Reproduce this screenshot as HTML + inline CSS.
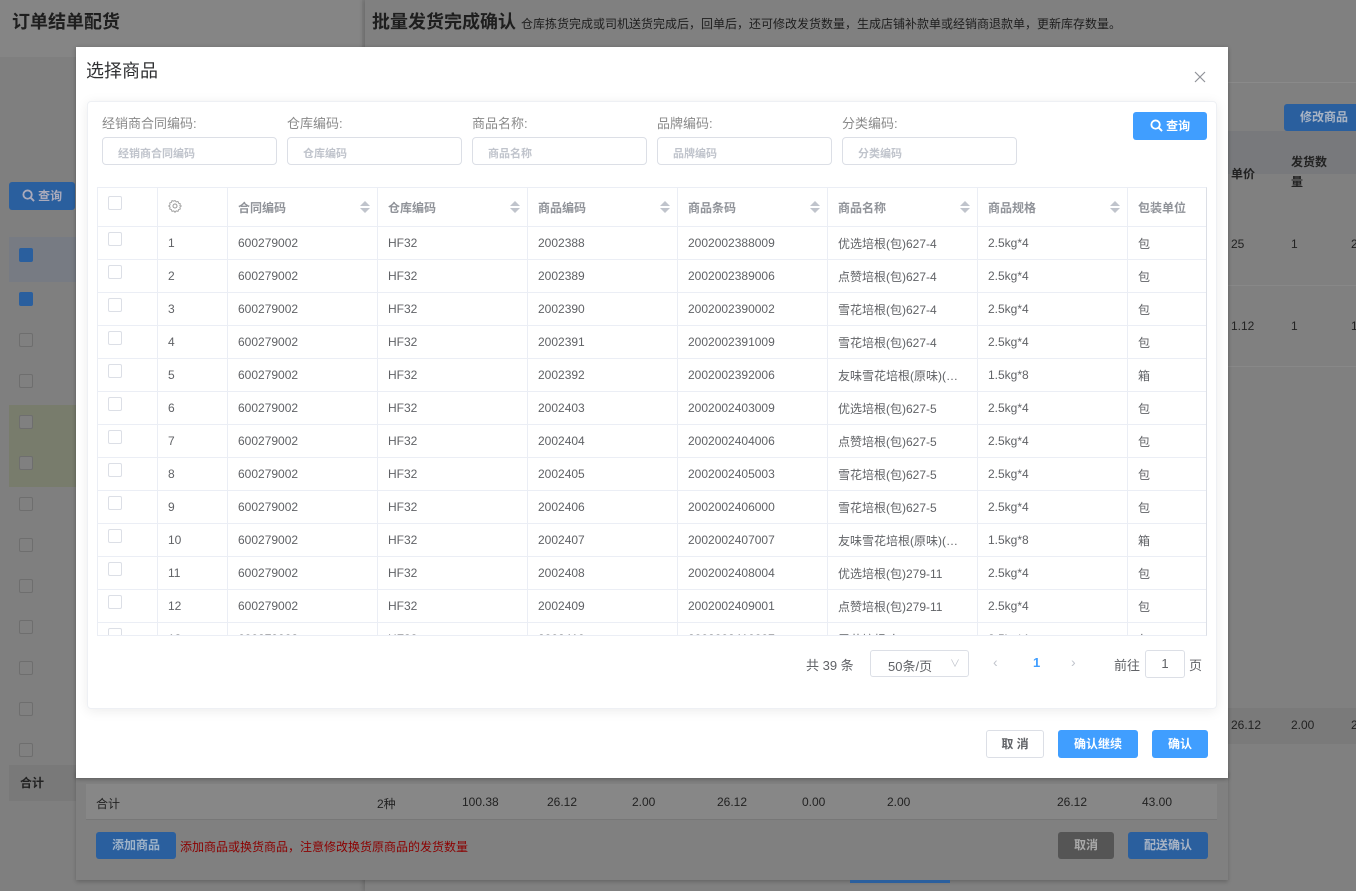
<!DOCTYPE html>
<html><head><meta charset="utf-8"><style>
*{margin:0;padding:0;box-sizing:border-box}
body{width:1356px;height:891px;overflow:hidden;background:#7f7f7f;font-family:"Liberation Sans","Noto Sans CJK SC",sans-serif;position:relative;color:#606266}
.a{position:absolute}
.cb{position:absolute;width:14px;height:14px;border:1px solid #6e6e6e;border-radius:2px;background:#808080}
.cbw{position:absolute;width:14px;height:14px;border:1px solid #dcdfe6;border-radius:2px;background:#fff}
table{border-collapse:collapse;table-layout:fixed}
td,th{border:1px solid #ebeef5;font-size:12px;padding-left:10px;text-align:left;white-space:nowrap;overflow:hidden;color:#606266;position:relative}
th{height:39px;font-weight:bold;font-size:12px;color:#909399}
td{height:33px}
.sort{position:absolute;right:12px;top:13px;width:0;height:0}
.sort:before{content:"";position:absolute;left:-5px;top:0;border:5px solid transparent;border-bottom:5px solid #c0c4cc;border-top:0}
.sort:after{content:"";position:absolute;left:-5px;top:7px;border:5px solid transparent;border-top:5px solid #c0c4cc;border-bottom:0}
.lbl{position:absolute;top:113px;font-size:13px;color:#8a8a8a}
.inp{position:absolute;top:137px;width:175px;height:28px;border:1px solid #dcdfe6;border-radius:4px;font-size:11px;color:#c0c4cc;padding:7px 15px;font-weight:bold}
.btn{position:absolute;border-radius:3px;font-size:12px;font-weight:bold;text-align:center;color:#fff}
.bt span{position:absolute}
</style></head><body>
<div class="a" style="left:0;top:0;width:362px;height:57px;background:#858585"></div>
<div class="a" style="left:12px;top:8px;font-size:18px;font-weight:bold;color:#1e1e1e">订单结单配货</div>
<div class="btn" style="left:9px;top:182px;width:66px;height:28px;background:#2a5f9e;line-height:28px;color:#aab"><svg width="13" height="13" viewBox="0 0 14 14" style="vertical-align:-2px"><circle cx="6" cy="6" r="4.5" fill="none" stroke="#aab" stroke-width="2"/><path d="M9.5 9.5L13 13" stroke="#aab" stroke-width="2"/></svg> 查询</div>
<div class="a" style="left:9px;top:237px;width:70px;height:45px;background:#777b83"></div>
<div class="a" style="left:9px;top:405px;width:70px;height:82px;background:#787c6c"></div>
<div class="a" style="left:9px;top:765px;width:70px;height:36px;background:#797979"></div>
<div class="a" style="left:20px;top:774px;font-size:12px;color:#222;font-weight:bold">合计</div>
<div class="a" style="left:19px;top:248px;width:14px;height:14px;background:#2a5f9e;border-radius:2px"></div>
<div class="a" style="left:19px;top:292px;width:14px;height:14px;background:#2a5f9e;border-radius:2px"></div>
<div class="cb" style="left:19px;top:333px"></div><div class="cb" style="left:19px;top:374px"></div>
<div class="cb" style="left:19px;top:415px"></div><div class="cb" style="left:19px;top:456px"></div>
<div class="cb" style="left:19px;top:497px"></div><div class="cb" style="left:19px;top:538px"></div>
<div class="cb" style="left:19px;top:579px"></div><div class="cb" style="left:19px;top:620px"></div>
<div class="cb" style="left:19px;top:661px"></div><div class="cb" style="left:19px;top:702px"></div>
<div class="cb" style="left:19px;top:743px"></div>
<div class="a" style="left:365px;top:0;width:991px;height:891px;background:#808080;box-shadow:-2px 0 4px rgba(0,0,0,.15)"></div>
<div class="a" style="left:372px;top:8px;font-size:18px;font-weight:bold;color:#1e1e1e">批量发货完成确认 <span style="font-size:12px;font-weight:normal">仓库拣货完成或司机送货完成后，回单后，还可修改发货数量，生成店铺补款单或经销商退款单，更新库存数量。</span></div>
<div class="a" style="left:1228px;top:82px;width:128px;height:1px;background:#8a8a8a"></div>
<div class="btn" style="left:1284px;top:104px;width:80px;height:27px;background:#2a5f9e;line-height:27px;color:#a9b4c4">修改商品</div>
<div class="a" style="left:1228px;top:131px;width:128px;height:43px;background:#78797c"></div>
<div class="a" style="left:1231px;top:165px;font-size:12px;font-weight:bold;color:#222">单价</div>
<div class="a" style="left:1291px;top:152px;font-size:12px;font-weight:bold;color:#222;line-height:20px">发货数<br>量</div>
<div class="a" style="left:1231px;top:237px;font-size:12px;color:#222">25</div><div class="a" style="left:1291px;top:237px;font-size:12px;color:#222">1</div><div class="a" style="left:1351px;top:237px;font-size:12px;color:#222">2</div>
<div class="a" style="left:1228px;top:285px;width:128px;height:1px;background:#888"></div>
<div class="a" style="left:1231px;top:319px;font-size:12px;color:#222">1.12</div><div class="a" style="left:1291px;top:319px;font-size:12px;color:#222">1</div><div class="a" style="left:1351px;top:319px;font-size:12px;color:#222">1</div>
<div class="a" style="left:1228px;top:366px;width:128px;height:1px;background:#888"></div>
<div class="a" style="left:1228px;top:708px;width:128px;height:36px;background:#7a7a7a"></div>
<div class="a" style="left:1231px;top:718px;font-size:12px;color:#222">26.12</div><div class="a" style="left:1291px;top:718px;font-size:12px;color:#222">2.00</div><div class="a" style="left:1351px;top:718px;font-size:12px;color:#222">2</div>
<div class="a" style="left:76px;top:770px;width:1152px;height:110px;background:#808080;box-shadow:0 2px 4px rgba(0,0,0,.2)"></div>
<div class="a" style="left:86px;top:784px;width:1131px;height:36px;background:#878787;border-bottom:1px solid #777"></div>
<div class="a bt" style="left:96px;top:795px;font-size:12px;color:#222;width:1120px">合计
<span style="left:281px">2种</span><span style="left:366px">100.38</span><span style="left:451px">26.12</span><span style="left:536px">2.00</span><span style="left:621px">26.12</span><span style="left:706px">0.00</span><span style="left:791px">2.00</span><span style="left:961px">26.12</span><span style="left:1046px">43.00</span></div>
<div class="btn" style="left:96px;top:832px;width:80px;height:27px;background:#2a5f9e;line-height:27px;color:#9fb3c8">添加商品</div>
<div class="a" style="left:180px;top:838px;font-size:12px;color:#8b0000">添加商品或换货商品，注意修改换货原商品的发货数量</div>
<div class="btn" style="left:1058px;top:832px;width:56px;height:27px;background:#555;line-height:27px;color:#aaa">取消</div>
<div class="btn" style="left:1128px;top:832px;width:80px;height:27px;background:#2a5f9e;line-height:27px;color:#a9b4c4">配送确认</div>
<div class="a" style="left:850px;top:880px;width:100px;height:3px;background:#2a5f9e"></div>
<div class="a" style="left:76px;top:47px;width:1152px;height:731px;background:#fff;box-shadow:0 1px 4px rgba(0,0,0,.3)"></div>
<div class="a" style="left:86px;top:57px;font-size:18px;color:#303133">选择商品</div>
<svg class="a" style="left:1194px;top:71px" width="12" height="12" viewBox="0 0 12 12"><path d="M1 1L11 11M11 1L1 11" stroke="#909399" stroke-width="1.2"/></svg>
<div class="a" style="left:87px;top:101px;width:1130px;height:608px;background:#fff;border:1px solid #eef0f4;border-radius:4px;box-shadow:0 2px 12px rgba(0,0,0,.08)"></div>
<div class="lbl" style="left:102px">经销商合同编码:</div>
<div class="lbl" style="left:287px">仓库编码:</div>
<div class="lbl" style="left:472px">商品名称:</div>
<div class="lbl" style="left:657px">品牌编码:</div>
<div class="lbl" style="left:842px">分类编码:</div>
<div class="inp" style="left:102px">经销商合同编码</div>
<div class="inp" style="left:287px">仓库编码</div>
<div class="inp" style="left:472px">商品名称</div>
<div class="inp" style="left:657px">品牌编码</div>
<div class="inp" style="left:842px">分类编码</div>
<div class="btn" style="left:1133px;top:112px;width:74px;height:28px;background:#409eff;line-height:28px;font-size:12px"><svg width="13" height="13" viewBox="0 0 14 14" style="vertical-align:-2px"><circle cx="6" cy="6" r="4.5" fill="none" stroke="#fff" stroke-width="2"/><path d="M9.5 9.5L13 13" stroke="#fff" stroke-width="2"/></svg> 查询</div>
<div class="a" style="left:97px;top:187px;width:1110px;height:449px;overflow:hidden;border:1px solid #ebeef5;border-right:1px solid #dcdfe6">
<table style="width:1110px;margin:-1px 0 0 -1px">
<colgroup><col style="width:60px"><col style="width:70px"><col style="width:150px"><col style="width:150px"><col style="width:150px"><col style="width:150px"><col style="width:150px"><col style="width:150px"><col style="width:80px"></colgroup>
<tr><th><span class="cbw" style="left:10px;top:8px"></span></th><th><svg width="14" height="14" viewBox="0 0 14 14"><circle cx="7" cy="7" r="2" fill="none" stroke="#999"/><path d="M7 1.5l1.2 1.4 1.8-.4.6 1.7 1.7.6-.4 1.8L13.3 7l-1.4 1.2.4 1.8-1.7.6-.6 1.7-1.8-.4L7 13.3l-1.2-1.4-1.8.4-.6-1.7-1.7-.6.4-1.8L.7 7l1.4-1.2-.4-1.8 1.7-.6.6-1.7 1.8.4z" fill="none" stroke="#999" stroke-width=".9"/></svg></th><th>合同编码<i class="sort"></i></th><th>仓库编码<i class="sort"></i></th><th>商品编码<i class="sort"></i></th><th>商品条码<i class="sort"></i></th><th>商品名称<i class="sort"></i></th><th>商品规格<i class="sort"></i></th><th>包装单位</th></tr>
<tr><td><span class="cbw" style="left:10px;top:5px"></span></td><td>1</td><td>600279002</td><td>HF32</td><td>2002388</td><td>2002002388009</td><td>优选培根(包)627-4</td><td>2.5kg*4</td><td>包</td></tr>
<tr><td><span class="cbw" style="left:10px;top:5px"></span></td><td>2</td><td>600279002</td><td>HF32</td><td>2002389</td><td>2002002389006</td><td>点赞培根(包)627-4</td><td>2.5kg*4</td><td>包</td></tr>
<tr><td><span class="cbw" style="left:10px;top:5px"></span></td><td>3</td><td>600279002</td><td>HF32</td><td>2002390</td><td>2002002390002</td><td>雪花培根(包)627-4</td><td>2.5kg*4</td><td>包</td></tr>
<tr><td><span class="cbw" style="left:10px;top:5px"></span></td><td>4</td><td>600279002</td><td>HF32</td><td>2002391</td><td>2002002391009</td><td>雪花培根(包)627-4</td><td>2.5kg*4</td><td>包</td></tr>
<tr><td><span class="cbw" style="left:10px;top:5px"></span></td><td>5</td><td>600279002</td><td>HF32</td><td>2002392</td><td>2002002392006</td><td>友味雪花培根(原味)(…</td><td>1.5kg*8</td><td>箱</td></tr>
<tr><td><span class="cbw" style="left:10px;top:5px"></span></td><td>6</td><td>600279002</td><td>HF32</td><td>2002403</td><td>2002002403009</td><td>优选培根(包)627-5</td><td>2.5kg*4</td><td>包</td></tr>
<tr><td><span class="cbw" style="left:10px;top:5px"></span></td><td>7</td><td>600279002</td><td>HF32</td><td>2002404</td><td>2002002404006</td><td>点赞培根(包)627-5</td><td>2.5kg*4</td><td>包</td></tr>
<tr><td><span class="cbw" style="left:10px;top:5px"></span></td><td>8</td><td>600279002</td><td>HF32</td><td>2002405</td><td>2002002405003</td><td>雪花培根(包)627-5</td><td>2.5kg*4</td><td>包</td></tr>
<tr><td><span class="cbw" style="left:10px;top:5px"></span></td><td>9</td><td>600279002</td><td>HF32</td><td>2002406</td><td>2002002406000</td><td>雪花培根(包)627-5</td><td>2.5kg*4</td><td>包</td></tr>
<tr><td><span class="cbw" style="left:10px;top:5px"></span></td><td>10</td><td>600279002</td><td>HF32</td><td>2002407</td><td>2002002407007</td><td>友味雪花培根(原味)(…</td><td>1.5kg*8</td><td>箱</td></tr>
<tr><td><span class="cbw" style="left:10px;top:5px"></span></td><td>11</td><td>600279002</td><td>HF32</td><td>2002408</td><td>2002002408004</td><td>优选培根(包)279-11</td><td>2.5kg*4</td><td>包</td></tr>
<tr><td><span class="cbw" style="left:10px;top:5px"></span></td><td>12</td><td>600279002</td><td>HF32</td><td>2002409</td><td>2002002409001</td><td>点赞培根(包)279-11</td><td>2.5kg*4</td><td>包</td></tr>
<tr><td><span class="cbw" style="left:10px;top:5px"></span></td><td>13</td><td>600279002</td><td>HF32</td><td>2002410</td><td>2002002410007</td><td>雪花培根(包)279-11</td><td>2.5kg*4</td><td>包</td></tr>
</table></div>
<div class="a" style="left:806px;top:655px;font-size:13px;color:#606266">共 39 条</div>
<div class="a" style="left:870px;top:650px;width:99px;height:27px;border:1px solid #dcdfe6;border-radius:3px;font-size:13px;padding:5px 0 0 17px;color:#606266">50条/页<span style="position:absolute;right:8px;top:4px;color:#c0c4cc;font-size:10px">∨</span></div>
<div class="a" style="left:993px;top:654px;font-size:14px;color:#c0c4cc">‹</div>
<div class="a" style="left:1033px;top:655px;font-size:13px;color:#409eff;font-weight:bold">1</div>
<div class="a" style="left:1071px;top:654px;font-size:14px;color:#c0c4cc">›</div>
<div class="a" style="left:1114px;top:655px;font-size:13px;color:#606266">前往</div>
<div class="a" style="left:1145px;top:650px;width:40px;height:28px;border:1px solid #dcdfe6;border-radius:3px;font-size:13px;text-align:center;line-height:26px">1</div>
<div class="a" style="left:1189px;top:655px;font-size:13px;color:#606266">页</div>
<div class="btn" style="left:986px;top:730px;width:58px;height:28px;border:1px solid #dcdfe6;background:#fff;color:#606266;line-height:26px">取 消</div>
<div class="btn" style="left:1058px;top:730px;width:80px;height:28px;background:#409eff;line-height:28px">确认继续</div>
<div class="btn" style="left:1152px;top:730px;width:56px;height:28px;background:#409eff;line-height:28px">确认</div>
</body></html>
